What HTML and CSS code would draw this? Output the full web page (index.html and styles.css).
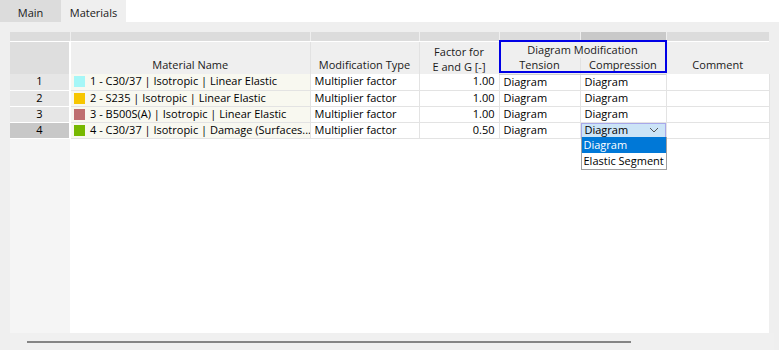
FILE: index.html
```html
<!DOCTYPE html>
<html lang="en">
<head>
    <meta charset="UTF-8">
    <title>Materials</title>
    <link rel="stylesheet" href="styles.css">
</head>
<body>
    <div class="tabs">
        <div class="tab">Main</div>
        <div class="tab active">Materials</div>
    </div>

    <div class="panel">
        <div class="grid">
            <table>
                <colgroup>
                    <col style="width: 60px">
                    <col style="width: 240px">
                    <col style="width: 109px">
                    <col style="width: 80px">
                    <col style="width: 81px">
                    <col style="width: 86px">
                    <col style="width: 103px">
                </colgroup>
                <tr class="band">
                    <td></td><td></td><td></td><td></td><td></td><td class="dark"></td><td></td>
                </tr>
                <tr class="head">
                    <th class="corner" rowspan="2"></th>
                    <th rowspan="2">Material Name</th>
                    <th rowspan="2">Modification Type</th>
                    <th rowspan="2" class="two">Factor for<br>E and G [-]</th>
                    <th colspan="2" class="group">Diagram Modification</th>
                    <th rowspan="2">Comment</th>
                </tr>
                <tr class="head sub">
                    <th class="split">Tension</th>
                    <th>Compression</th>
                </tr>
                <tr>
                    <td class="num">1</td>
                    <td class="name"><span class="swatch" style="background: #a6f7f7"></span>1 - C30/37 | Isotropic | Linear Elastic</td>
                    <td>Multiplier factor</td>
                    <td class="right">1.00</td>
                    <td>Diagram</td>
                    <td>Diagram</td>
                    <td></td>
                </tr>
                <tr>
                    <td class="num">2</td>
                    <td class="name"><span class="swatch" style="background: #f7c600"></span>2 - S235 | Isotropic | Linear Elastic</td>
                    <td>Multiplier factor</td>
                    <td class="right">1.00</td>
                    <td>Diagram</td>
                    <td>Diagram</td>
                    <td></td>
                </tr>
                <tr>
                    <td class="num">3</td>
                    <td class="name"><span class="swatch" style="background: #bf6f6f"></span>3 - B500S(A) | Isotropic | Linear Elastic</td>
                    <td>Multiplier factor</td>
                    <td class="right">1.00</td>
                    <td>Diagram</td>
                    <td>Diagram</td>
                    <td></td>
                </tr>
                <tr class="current">
                    <td class="num">4</td>
                    <td class="name"><span class="swatch" style="background: #77b800"></span>4 - C30/37 | Isotropic | Damage (Surfaces...</td>
                    <td>Multiplier factor</td>
                    <td class="right">0.50</td>
                    <td>Diagram</td>
                    <td class="editing">
                        <div class="combo">
                            <span>Diagram</span>
                            <svg width="10" height="6" viewBox="0 0 10 6"><polyline points="1,1 5,5 9,1" fill="none" stroke="#555" stroke-width="1"/></svg>
                        </div>
                        <ul class="menu">
                            <li class="picked">Diagram</li>
                            <li>Elastic Segment</li>
                        </ul>
                    </td>
                    <td></td>
                </tr>
                <tr class="rest">
                    <td class="num"></td><td colspan="6"></td>
                </tr>
            </table>
            <div class="highlight"></div>
        </div>
        <div class="hscroll"><div class="thumb"></div></div>
    </div>
</body>
</html>
```

FILE: styles.css
```css
html, body {
    margin: 0;
    width: 779px;
    height: 350px;
    overflow: hidden;
    background: #ffffff;
    font-family: "Open Sans", "Noto Sans", sans-serif;
    font-size: 11px;
    color: #000;
}
.tabs {
    display: flex;
    height: 22px;
}
.tab {
    display: flex;
    align-items: center;
    justify-content: center;
    width: 61px;
    padding-top: 2px;
    box-sizing: border-box;
    background: #dcdcdc;
    color: #1a1a1a;
}
.tab.active {
    width: 65px;
    background: #efefef;
}
.panel {
    background: #efefef;
    height: 328px;
    padding: 10px 10px 0 10px;
    box-sizing: border-box;
}
.grid {
    position: relative;
    width: 759px;
}
table {
    border-collapse: collapse;
    table-layout: fixed;
    width: 759px;
}
td, th {
    padding: 0 4px;
    white-space: nowrap;
    overflow: hidden;
    text-overflow: clip;
    font-weight: normal;
}
.band td {
    height: 9px;
    padding: 0;
    background: #dcdcdc;
    border-left: 1px solid #efefef;
    border-bottom: 1px solid #fff;
}
.band td:first-child {
    border-left: none;
}
.band td.dark {
    background: #c9c9c9;
}
.head th {
    height: 16px;
    line-height: 14px;
    padding-bottom: 2px;
    box-sizing: border-box;
    vertical-align: bottom;
    text-align: center;
    background: #efefef;
    color: #1a1a1a;
    border-left: 1px solid #e2e2e2;
}
.head.sub th {
    height: 15px;
    padding-bottom: 2px;
}
.head th.corner {
    background: #dedede;
    border-left: none;
    border-right: 2px solid #fff;
}
.head th.two {
    line-height: 15px;
    padding-bottom: 0;
}
.head th.group {
    vertical-align: top;
    padding-top: 1px;
    padding-bottom: 0;
}
.head.sub th.split {
    border-left: 1px solid #e2e2e2;
}
.head.sub th {
    border-bottom: 1px solid #d0d0d0;
}
tr:not(.band):not(.head) td {
    height: 15px;
    line-height: 14px;
    padding-bottom: 1px;
    box-sizing: border-box;
    vertical-align: top;
    border: 1px solid #e3e3e3;
    border-top: none;
    background: #fff;
}
td.num {
    text-align: center;
    background: #e6e6e6 !important;
    border-bottom: 1px solid #fff !important;
    border-right: 2px solid #fff !important;
    border-left: none !important;
}
tr.current td.num {
    background: #c8c8c8 !important;
}
td.name {
    background: #f8f8f0 !important;
    padding-left: 3px;
}
td.right {
    text-align: right;
}
.swatch {
    display: inline-block;
    width: 11px;
    height: 11px;
    margin-right: 5px;
    vertical-align: -2px;
}
tr.rest td {
    height: 195px !important;
    border: none !important;
}
tr.rest td.num {
    background: #f5f5f5 !important;
}
td.editing {
    position: relative;
    overflow: visible;
    padding: 0 !important;
}
.combo {
    display: flex;
    justify-content: space-between;
    align-items: center;
    height: 15px;
    padding: 0 6px 0 3px;
    background: #cce4f7;
    border: 1px solid #a8a8ea;
    box-sizing: border-box;
}
.menu {
    position: absolute;
    left: 0;
    top: 14px;
    width: 86px;
    margin: 0;
    padding: 0;
    list-style: none;
    background: #fff;
    border: 1px solid #a0a0a0;
    border-top: none;
    box-sizing: border-box;
    z-index: 2;
}
.menu li {
    height: 16px;
    line-height: 15px;
    padding: 0 2px;
}
.menu li.picked {
    background: #0078d7;
    color: #fff;
}
.highlight {
    position: absolute;
    left: 489px;
    top: 8px;
    width: 168px;
    height: 33px;
    border: 2px solid #0000e6;
    box-sizing: border-box;
    pointer-events: none;
}
.hscroll {
    height: 17px;
    background: #f0f0f0;
    width: 764px;
    display: flex;
    align-items: center;
    padding-left: 17px;
    box-sizing: border-box;
}
.thumb {
    width: 604px;
    height: 2px;
    background: #858585;
}
```
